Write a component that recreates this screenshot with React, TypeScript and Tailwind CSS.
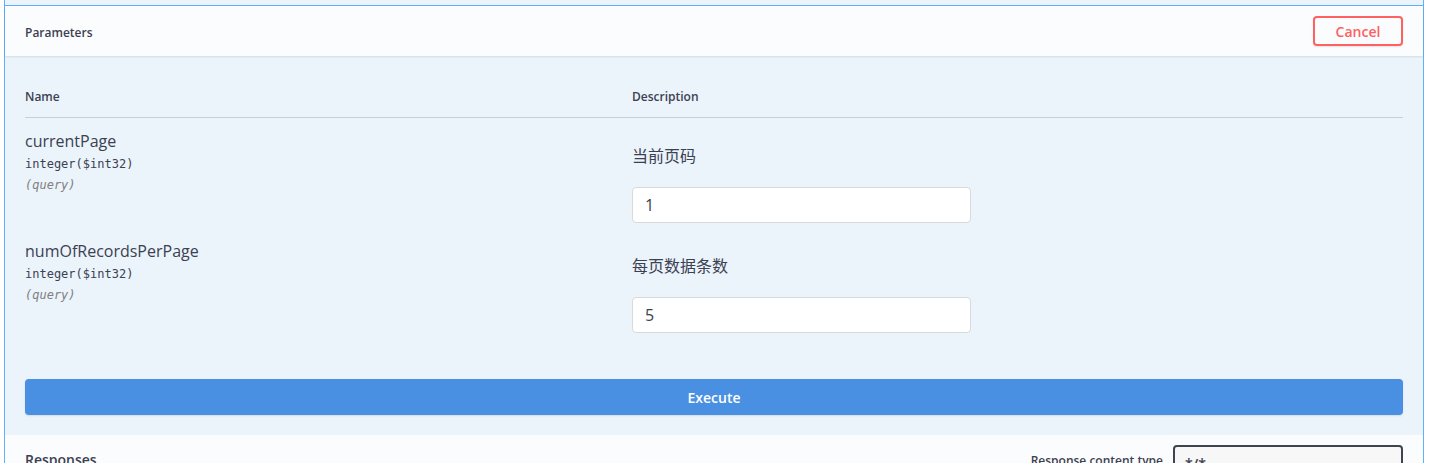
import { ChevronDown } from "lucide-react";

const params = [
  { name: "currentPage", type: "integer($int32)", where: "(query)", desc: "当前页码", value: "1" },
  { name: "numOfRecordsPerPage", type: "integer($int32)", where: "(query)", desc: "每页数据条数", value: "5" },
];

const sans = "font-['Open_Sans','Noto_Sans_CJK_SC',sans-serif]";
const mono = "font-['DejaVu_Sans_Mono',monospace]";

export default function App() {
  return (
    <div className={`h-[463px] overflow-hidden bg-white text-[#3b4151] ${sans}`}>
      <div className="ml-[4px] w-[1420px] border-x border-[#61affe] bg-[#ebf3fb]">
        <div className="h-[6px] border-b border-[#61affe]" />

        {/* Parameters header */}
        <div className="flex h-[50px] items-center justify-between bg-[#fbfcfe] px-[20px] shadow-[0_1px_2px_rgba(0,0,0,0.1)]">
          <div className="mt-[3px] text-[12px] font-semibold">Parameters</div>
          <button className="h-[30px] w-[90px] rounded-[4px] border-2 border-[#ff6060] text-[14px] font-semibold text-[#ff6060] shadow-[0_1px_2px_rgba(0,0,0,0.1)]">
            Cancel
          </button>
        </div>

        {/* Table */}
        <div className="px-[20px] pb-[20px]">
          <div className="grid grid-cols-[607px_1fr] border-b border-[#c8ced8] pt-[32px] pb-[11px] text-[12px] font-semibold leading-[18px]">
            <div>Name</div>
            <div>Description</div>
          </div>

          {params.map((p) => (
            <div key={p.name} className="grid grid-cols-[607px_1fr]">
              <div className="pt-[13px]">
                <div className="text-[16px] leading-[20px]">{p.name}</div>
                <div className={`mt-[4px] text-[12px] leading-[18px] ${mono}`}>{p.type}</div>
                <div className={`mt-[3px] text-[12px] italic leading-[18px] text-[#808080] ${mono}`}>{p.where}</div>
              </div>
              <div className="pt-[28px] pb-[5px]">
                <div className="text-[16px] leading-[20px]">{p.desc}</div>
                <input
                  readOnly
                  value={p.value}
                  className="mt-[21px] block h-[36px] w-[339px] rounded-[4px] border border-[#d9d9d9] bg-white px-[12px] text-[16px] text-[#3b4151] outline-none"
                />
              </div>
            </div>
          ))}

          <button className="mt-[41px] block h-[36px] w-full rounded-[4px] bg-[#4990e2] text-[14px] font-semibold text-white shadow-[0_1px_2px_rgba(0,0,0,0.1)]">
            Execute
          </button>
        </div>

        {/* Responses header */}
        <div className="flex h-[60px] items-start justify-between bg-[#fbfcfe] px-[20px] pt-[10px]">
          <div className="mt-[5px] text-[14px] font-semibold leading-[20px]">Responses</div>
          <div className="flex items-start gap-[10px]">
            <span className="mt-[7px] text-[12px] font-semibold leading-[18px]">Response content type</span>
            <div className="flex h-[40px] w-[230px] items-start justify-between rounded-[4px] border-2 border-[#41444e] bg-[#f7f7f7] px-[10px] pt-[6px] text-[14px] font-semibold">
              <span>*/*</span>
              <ChevronDown size={14} strokeWidth={3} className="mt-[8px]" />
            </div>
          </div>
        </div>
      </div>
    </div>
  );
}
